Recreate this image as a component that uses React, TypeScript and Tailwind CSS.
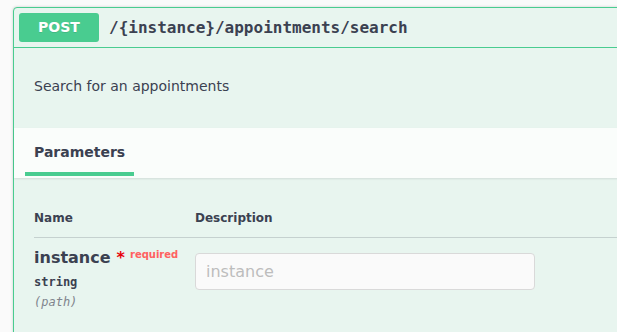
import React from 'react';

const sans = { fontFamily: '"DejaVu Sans", sans-serif' };
const mono = { fontFamily: '"DejaVu Sans Mono", monospace' };

const App = () => {
  return (
    <div className="w-[617px] h-[332px] overflow-hidden bg-[#fafafa] pt-[7px] pl-[13px]" style={sans}>
      {/* POST opblock */}
      <div className="w-[700px] rounded-[4px] border border-[#49cc90] bg-[#e8f5ef] shadow-[0_0_3px_rgba(0,0,0,0.19)] text-[#3b4151]">
        {/* Summary */}
        <div className="flex items-center p-[5px] border-b border-[#49cc90]">
          <span className="w-[80px] h-[29px] flex items-center justify-center rounded-[3px] bg-[#49cc90] text-white text-[14px] font-bold [text-shadow:0_1px_0_rgba(0,0,0,0.1)]">
            POST
          </span>
          <span className="px-[10px] text-[16px] font-bold" style={mono}>
            /{'{instance}'}/appointments/search
          </span>
        </div>

        {/* Description */}
        <div className="px-5 pt-[30px] pb-[33px] text-[14px] leading-[17px]">
          Search for an appointments
        </div>

        {/* Section header */}
        <div className="h-[50px] px-5 pt-4 bg-[#fafdfb] shadow-[0_1px_2px_rgba(0,0,0,0.1)]">
          <div className="w-fit -ml-[9px] px-[9px] pb-3 border-b-4 border-[#49cc90] text-[14px] leading-[16px] font-bold">
            Parameters
          </div>
        </div>

        {/* Parameters table */}
        <div className="pt-[21px] pl-5 pb-6">
          <div className="flex border-b border-[rgba(59,65,81,0.2)] py-3 text-[12px] leading-[14px] font-bold">
            <div className="w-[161px]">Name</div>
            <div>Description</div>
          </div>
          <div className="flex py-[10px]">
            <div className="w-[161px] flex flex-col">
              <div className="flex items-start text-[16px] leading-[19px] font-bold">
                <span>instance</span>
                <span className="ml-[6px] text-red-600">*</span>
                <span className="ml-[5px] -mt-[3px] text-[10px] text-[#ff6161]">required</span>
              </div>
              <div className="pt-[8px] pb-[6px] text-[12px] leading-[14px] font-bold" style={mono}>
                string
              </div>
              <div className="text-[12px] leading-[14px] italic text-[#80848d]" style={mono}>
                (path)
              </div>
            </div>
            <div>
              <input
                placeholder="instance"
                className="mt-[5px] w-[340px] h-[37px] px-[10px] rounded-[4px] border border-[#d9d9d9] bg-[#fafafa] text-[16px] placeholder:text-[#bdbdbd] outline-none"
                style={sans}
              />
            </div>
          </div>
        </div>
      </div>
    </div>
  );
};

export default App;
